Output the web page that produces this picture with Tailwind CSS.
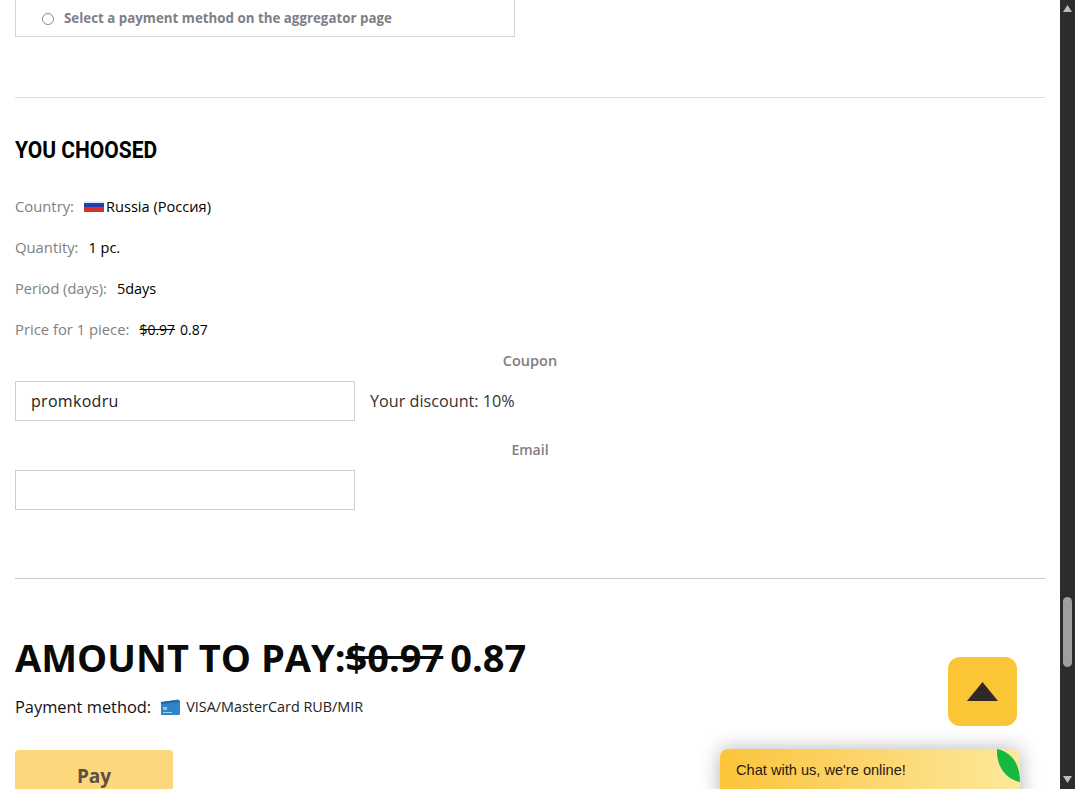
<!DOCTYPE html>
<html>
<head>
<meta charset="utf-8">
<script src="https://cdn.jsdelivr.net/npm/@tailwindcss/browser@4"></script>
</head>
<body class="bg-white">
<div class="relative flex h-[789px] w-[1075px] overflow-hidden font-['Open_Sans',sans-serif]">
  <main class="w-[1060px] h-[789px] overflow-hidden px-[15px]">
    <div class="flex h-[37px] w-[500px] items-center gap-[10px] border border-t-0 border-[#d4d4d4] pl-[26px] pt-[1px]">
      <span class="h-[12px] w-[12px] rounded-full border border-[#8a8a8a] bg-white"></span>
      <span class="text-[13.33px] font-bold text-[#7d7f88]">Select a payment method on the aggregator page</span>
    </div>
    <hr class="mt-[60px] border-t border-[#dcdcdc]">
    <h2 class="mt-[37px] h-[30px] origin-left scale-x-[0.875] text-[24px] leading-[30px] font-bold text-black font-['Roboto',sans-serif]">YOU CHOOSED</h2>
    <div class="mt-[22px] flex h-[41px] items-center text-[14.5px] pb-[2px]">
      <span class="text-[14.8px] font-medium text-[#808080]">Country:</span>
      <span class="ml-[10px] flex h-[11px] w-[20px] flex-col overflow-hidden"><i class="h-[2px] bg-[#e8e8f4]"></i><i class="h-[4px] bg-[#1d3fb0]"></i><i class="h-[5px] bg-[#d3312a]"></i></span>
      <span class="ml-[2px] text-[14.6px] text-black">Russia (Россия)</span>
    </div>
    <div class="flex h-[41px] items-center text-[14.5px] pb-[2px]"><span class="text-[14.8px] font-medium text-[#808080]">Quantity:</span><span class="ml-[10px] text-black">1 pc.</span></div>
    <div class="flex h-[41px] items-center text-[14.5px] pb-[2px]"><span class="text-[14.6px] font-medium text-[#808080]">Period (days):</span><span class="ml-[10px] text-black">5days</span></div>
    <div class="flex h-[41px] items-center text-[14.5px] pb-[2px]"><span class="text-[14.8px] font-medium text-[#808080]">Price for 1 piece:</span><span class="ml-[10px] text-[14px] text-black line-through">$0.97</span><span class="ml-[5px] text-[14px] text-black">0.87</span></div>
    <div class="h-[21px] -mt-[1px] text-center text-[14.5px] font-semibold leading-[21px] text-[#808080]">Coupon</div>
    <div class="mt-[10px] flex items-center">
      <div class="flex h-[40px] w-[340px] items-center border border-[#cfcfcf] pl-[15px] text-[16px] tracking-[0.3px] text-[#222]">promkodru</div>
      <span class="ml-[15px] text-[16.2px] text-[#333]">Your discount: 10%</span>
    </div>
    <div class="mt-[18px] h-[21px] text-center text-[14px] font-semibold leading-[21px] text-[#808080]">Email</div>
    <div class="mt-[10px] h-[40px] w-[340px] border border-[#cfcfcf]"></div>
    <hr class="mt-[68px] border-t border-[#c8c8c8]">
    <div class="mt-[53px] flex h-[50px] items-center text-[38px] font-bold leading-[50px] text-[#0a0a0a]">
      <span>AMOUNT TO PAY:</span><span class="line-through">$0.97</span><span class="ml-[7px]">0.87</span>
    </div>
    <div class="mt-[13px] flex h-[24px] items-center">
      <span class="text-[16.4px] font-medium text-[#111]">Payment method:</span>
      <svg class="ml-[9px]" width="20" height="17" viewBox="0 0 20 17"><path d="M1 3 L18 0.5 L20 2 L20 15 L19 16 L1 16 Z" fill="#2f86c6"/><path d="M1 3 L18 1 L20 3 L1 5 Z" fill="#1f6aa6"/><rect x="3" y="8" width="4" height="3" fill="#8cc4e8"/><rect x="3" y="13" width="9" height="1" fill="#9ed0ee"/></svg>
      <span class="ml-[6px] text-[14.4px] font-medium text-[#222]">VISA/MasterCard RUB/MIR</span>
    </div>
    <button class="mt-[31px] block h-[52px] w-[158px] rounded-[4px] bg-[#fdd77c] text-[19px] font-bold text-[#5c5040]">Pay</button>
  </main>
  <aside class="relative h-[789px] w-[15px] bg-[#2c2c2c]">
    <svg class="absolute left-[3px] top-[5px]" width="9" height="7" viewBox="0 0 9 7"><path d="M4.5 0 L9 7 L0 7 Z" fill="#bdbdbd"/></svg>
    <div class="absolute left-[3px] top-[597px] h-[70px] w-[9px] rounded-[5px] bg-[#9f9f9f]"></div>
    <svg class="absolute left-[3px] top-[776px]" width="9" height="7" viewBox="0 0 9 7"><path d="M0 0 L9 0 L4.5 7 Z" fill="#bdbdbd"/></svg>
  </aside>
  <div class="absolute left-[948px] top-[657px] flex h-[69px] w-[69px] items-center justify-center rounded-[12px] bg-[#fbc536]">
    <svg width="31" height="19" viewBox="0 0 31 19"><path d="M15.5 0 L31 19 L0 19 Z" fill="#2f2a25"/></svg>
  </div>
  <div class="absolute left-[720px] top-[749px] h-[60px] w-[300px] overflow-hidden rounded-t-[8px] bg-gradient-to-r from-[#fbc536] via-[#fcd263] via-40% to-[#fde89a] shadow-[0_0_20px_rgba(0,0,0,0.3)]">
    <span class="absolute left-[16px] top-[12px] text-[14.6px] leading-[18px] text-[#2a1a10] font-['Liberation_Sans',sans-serif]">Chat with us, we're online!</span>
    <svg class="absolute right-0 top-0" width="23" height="34" viewBox="0 0 23 34"><path d="M0 0 C14 3 23 14 23 33 C8 30 -1 16 0 0 Z" fill="#17b840"/></svg>
  </div>
</div>
</body>
</html>
